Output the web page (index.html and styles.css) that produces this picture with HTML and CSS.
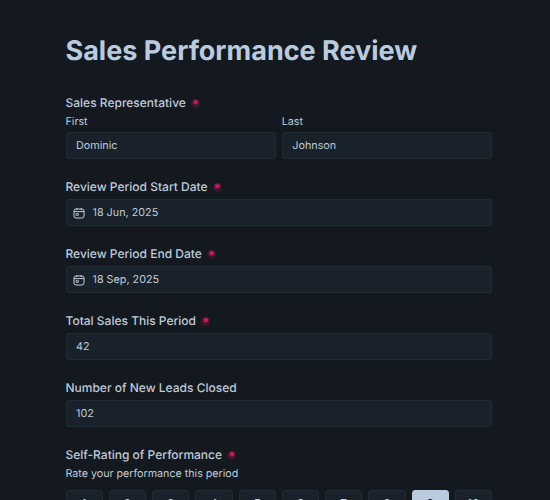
FILE: index.html
```html
<!DOCTYPE html>
<html lang="en">
<head>
  <meta charset="UTF-8">
  <meta name="viewport" content="width=device-width, initial-scale=1.0">
  <title>Sales Performance Review</title>
  <link rel="stylesheet" href="styles.css">
</head>
<body>
  <form class="review-form">
    <h1>Sales Performance Review</h1>

    <div class="field">
      <div class="field-label">Sales Representative <span class="req">*</span></div>
      <div class="name-row">
        <div>
          <div class="sub-label">First</div>
          <div class="input">Dominic</div>
        </div>
        <div>
          <div class="sub-label">Last</div>
          <div class="input">Johnson</div>
        </div>
      </div>
    </div>

    <div class="field">
      <div class="field-label">Review Period Start Date <span class="req">*</span></div>
      <div class="input date-input">
        <svg class="cal-icon" viewBox="0 0 12 12" width="12" height="12">
          <rect x="1" y="2" width="10" height="9" rx="2"></rect>
          <path d="M1 4.6h10M3.8 1v2M8.2 1v2"></path>
          <rect x="3" y="6.4" width="2.4" height="2" rx="0.5"></rect>
        </svg>
        18 Jun, 2025
      </div>
    </div>

    <div class="field">
      <div class="field-label">Review Period End Date <span class="req">*</span></div>
      <div class="input date-input">
        <svg class="cal-icon" viewBox="0 0 12 12" width="12" height="12">
          <rect x="1" y="2" width="10" height="9" rx="2"></rect>
          <path d="M1 4.6h10M3.8 1v2M8.2 1v2"></path>
          <rect x="3" y="6.4" width="2.4" height="2" rx="0.5"></rect>
        </svg>
        18 Sep, 2025
      </div>
    </div>

    <div class="field">
      <div class="field-label">Total Sales This Period <span class="req">*</span></div>
      <div class="input">42</div>
    </div>

    <div class="field">
      <div class="field-label">Number of New Leads Closed</div>
      <div class="input">102</div>
    </div>

    <div class="field">
      <div class="field-label">Self-Rating of Performance <span class="req">*</span></div>
      <div class="hint">Rate your performance this period</div>
      <div class="rating">
        <button type="button">1</button>
        <button type="button">2</button>
        <button type="button">3</button>
        <button type="button">4</button>
        <button type="button">5</button>
        <button type="button">6</button>
        <button type="button">7</button>
        <button type="button">8</button>
        <button type="button" class="selected">9</button>
        <button type="button">10</button>
      </div>
    </div>
  </form>
</body>
</html>
```

FILE: styles.css
```css
body {
  font-family: Inter, "Noto Sans", sans-serif;
  text-rendering: geometricPrecision;
  background-color: #141920;
  color: #bfcbd9;
  margin: 0;
  padding: 0;
}
.review-form {
  padding: 34px 58px 0 65.5px;
}
h1 {
  margin: 0 0 28px;
  font-size: 27px;
  line-height: 33px;
  font-weight: 700;
  color: #b9cbdf;
}
.field {
  margin-bottom: 20px;
}
.field-label {
  display: flex;
  align-items: center;
  gap: 5px;
  font-size: 12px;
  line-height: 16px;
  font-weight: 500;
  margin-bottom: 4px;
}
.req {
  width: 9px;
  height: 9px;
  border-radius: 50%;
  background-color: rgba(224, 19, 79, 0.18);
  color: #e8155a;
  font-size: 13px;
  font-weight: 700;
  line-height: 13px;
  text-align: center;
}
.sub-label, .hint {
  font-size: 10.7px;
  line-height: 14px;
  margin-bottom: 3px;
}
.hint {
  margin-bottom: 9px;
}
.name-row {
  display: grid;
  grid-template-columns: 1fr 1fr;
  gap: 6px;
}
.input {
  display: flex;
  align-items: center;
  gap: 7.5px;
  box-sizing: border-box;
  height: 27px;
  padding: 0 9.5px;
  background-color: #19222a;
  border: 1px solid #212c35;
  border-radius: 3px;
  font-size: 10.8px;
}
.date-input {
  padding-left: 6.5px;
}
.cal-icon {
  fill: none;
  stroke: #bfcbd9;
  stroke-width: 1;
}
.rating {
  display: grid;
  grid-template-columns: repeat(10, 1fr);
  gap: 6px;
}
.rating button {
  display: block;
  height: 36px;
  padding: 0 0 8px;
  background-color: #19222a;
  border: 1px solid #212c35;
  border-radius: 3px;
  color: #bfcbd9;
  font-family: inherit;
  font-size: 12px;
  line-height: 14px;
  text-align: center;
}
.rating .selected {
  background-color: #b9cbdf;
  border-color: #b9cbdf;
  color: #141920;
}
```
